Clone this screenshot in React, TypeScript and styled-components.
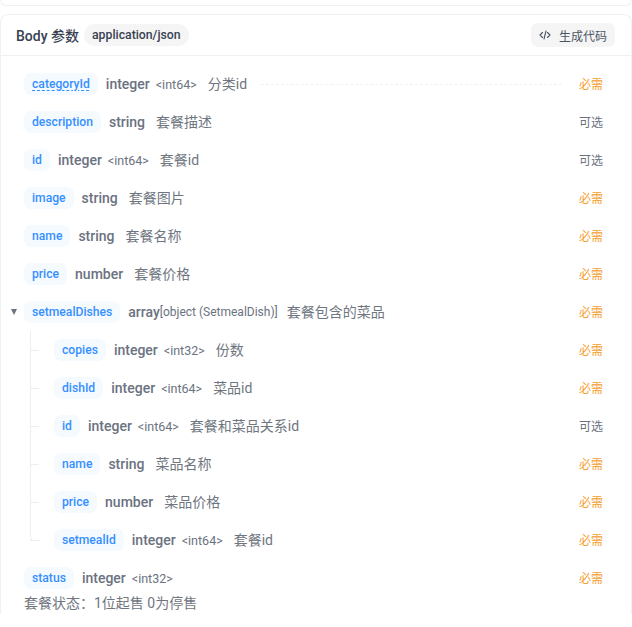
import styled, { createGlobalStyle } from "styled-components";

const GlobalStyle = createGlobalStyle`
  html, body {
    margin: 0;
    padding: 0;
    background: #fff;
    font-family: Roboto, "Noto Sans CJK SC", sans-serif;
  }
`;

type Field = {
  name: string;
  type: string;
  format?: string;
  desc?: string;
  required?: boolean;
  dashed?: boolean;
};

const topFields: Field[] = [
  { name: "categoryId", type: "integer", format: "<int64>", desc: "分类id", required: true, dashed: true },
  { name: "description", type: "string", desc: "套餐描述" },
  { name: "id", type: "integer", format: "<int64>", desc: "套餐id" },
  { name: "image", type: "string", desc: "套餐图片", required: true },
  { name: "name", type: "string", desc: "套餐名称", required: true },
  { name: "price", type: "number", desc: "套餐价格", required: true },
];

const dishFields: Field[] = [
  { name: "copies", type: "integer", format: "<int32>", desc: "份数", required: true },
  { name: "dishId", type: "integer", format: "<int64>", desc: "菜品id", required: true },
  { name: "id", type: "integer", format: "<int64>", desc: "套餐和菜品关系id" },
  { name: "name", type: "string", desc: "菜品名称", required: true },
  { name: "price", type: "number", desc: "菜品价格", required: true },
  { name: "setmealId", type: "integer", format: "<int64>", desc: "套餐id", required: true },
];

const FieldRow = ({ field }: { field: Field }) => (
  <Row>
    <NamePill $dashed={field.dashed}>{field.name}</NamePill>
    <TypeName>{field.type}</TypeName>
    {field.format && <Format>{field.format}</Format>}
    {field.desc && <Desc>{field.desc}</Desc>}
    <Leader $visible={field.dashed} />
    <Requirement $required={field.required}>{field.required ? "必需" : "可选"}</Requirement>
  </Row>
);

export default function App() {
  return (
    <>
      <GlobalStyle />
      <Page>
        <TopCardEdge />
        <Card>
          <Header>
            <HeaderTitle>Body 参数</HeaderTitle>
            <MediaPill>application/json</MediaPill>
            <CodeButton>
              <svg width="12" height="12" viewBox="0 0 24 24" fill="none" stroke="#4b5563" strokeWidth="2.2" strokeLinecap="round" strokeLinejoin="round">
                <polyline points="7 7 2 12 7 17" />
                <polyline points="17 7 22 12 17 17" />
                <line x1="14" y1="4" x2="10" y2="20" />
              </svg>
              生成代码
            </CodeButton>
          </Header>
          <Body>
            {topFields.map((f) => (
              <FieldRow key={f.name} field={f} />
            ))}
            <Row>
              <Caret />
              <NamePill>setmealDishes</NamePill>
              <TypeName>array</TypeName>
              <ArrayOf>[object (SetmealDish)]</ArrayOf>
              <Desc $gap={9}>套餐包含的菜品</Desc>
              <Leader />
              <Requirement $required>必需</Requirement>
            </Row>
            <Nested>
              {dishFields.map((f) => (
                <NestedItem key={f.name}>
                  <FieldRow field={f} />
                </NestedItem>
              ))}
            </Nested>
            <FieldRow field={{ name: "status", type: "integer", format: "<int32>", required: true }} />
            <Note>套餐状态：1位起售 0为停售</Note>
          </Body>
        </Card>
      </Page>
    </>
  );
}

const Page = styled.div`
  width: 632px;
  height: 627px;
  overflow: hidden;
  background: #fff;
`;

const TopCardEdge = styled.div`
  height: 5px;
  border: 1px solid #f0f1f3;
  border-top: 0;
  border-radius: 0 0 8px 8px;
`;

const Card = styled.section`
  margin-top: 8px;
  border: 1px solid #f0f1f3;
  border-bottom: 0;
  border-radius: 8px 8px 0 0;
`;

const Header = styled.header`
  display: flex;
  align-items: center;
  height: 40px;
  padding: 0 16px 0 15px;
  border-bottom: 1px solid #f0f1f3;
`;

const HeaderTitle = styled.h3`
  margin: 0;
  font-size: 14px;
  font-weight: 500;
  color: #374151;
`;

const MediaPill = styled.span`
  margin-left: 5px;
  padding: 0 8px;
  height: 22px;
  line-height: 22px;
  border-radius: 11px;
  background: #f5f5f6;
  font-size: 12.25px;
  font-weight: 500;
  color: #374151;
`;

const CodeButton = styled.button`
  display: flex;
  align-items: center;
  gap: 8px;
  margin-left: auto;
  height: 24px;
  padding: 0 8px;
  border: 0;
  border-radius: 7px;
  background: #f5f5f6;
  font: inherit;
  font-size: 12px;
  color: #4b5563;
`;

const Body = styled.div`
  position: relative;
  padding: 9px 28px 0 23px;
`;

const Row = styled.div`
  position: relative;
  display: flex;
  align-items: center;
  height: 38px;
`;

const NamePill = styled.span<{ $dashed?: boolean }>`
  flex: none;
  height: 22px;
  line-height: 22px;
  padding: 0 8px;
  border-radius: 7px;
  background: #f5faff;
  font-size: 12.15px;
  font-weight: 500;
  color: #3590ff;
  text-decoration: ${(p) => (p.$dashed ? "underline dashed" : "none")};
  text-underline-offset: 2px;
`;

const TypeName = styled.span`
  margin-left: 8px;
  font-size: 14px;
  font-weight: 500;
  color: #6b7280;
`;

const Format = styled.span`
  margin-left: 6px;
  font-size: 12.5px;
  color: #6b7280;
`;

const ArrayOf = styled.span`
  font-size: 12px;
  color: #6b7280;
`;

const Desc = styled.span<{ $gap?: number }>`
  margin-left: ${(p) => p.$gap ?? 11}px;
  padding-bottom: 3px;
  font-size: 14px;
  color: #6f7680;
`;

const Leader = styled.span<{ $visible?: boolean }>`
  flex: 1;
  min-width: 0;
  margin: 0 17px 0 14px;
  border-top: 1px dashed ${(p) => (p.$visible ? "#f0f1f3" : "transparent")};
`;

const Requirement = styled.span<{ $required?: boolean }>`
  flex: none;
  padding-bottom: 2px;
  font-size: 12px;
  color: ${(p) => (p.$required ? "#f5a030" : "#6b7280")};
`;

const Caret = styled.span`
  position: absolute;
  left: -13px;
  top: 16px;
  border-left: 3.5px solid transparent;
  border-right: 3.5px solid transparent;
  border-top: 6px solid #6b7280;
`;

const Nested = styled.div`
  position: relative;
  padding-left: 30px;

  &::before {
    content: "";
    position: absolute;
    left: 6px;
    top: 0;
    bottom: 18px;
    width: 9px;
    border-left: 1px solid #eceef1;
    border-bottom: 1px solid #eceef1;
    border-bottom-left-radius: 4px;
  }
`;

const NestedItem = styled.div`
  position: relative;

  &::before {
    content: "";
    position: absolute;
    left: -24px;
    top: 19px;
    width: 9px;
    border-top: 1px solid #eceef1;
  }
`;

const Note = styled.p`
  margin: -5px 0 0;
  font-size: 14px;
  line-height: 22px;
  color: #6f7680;
`;
